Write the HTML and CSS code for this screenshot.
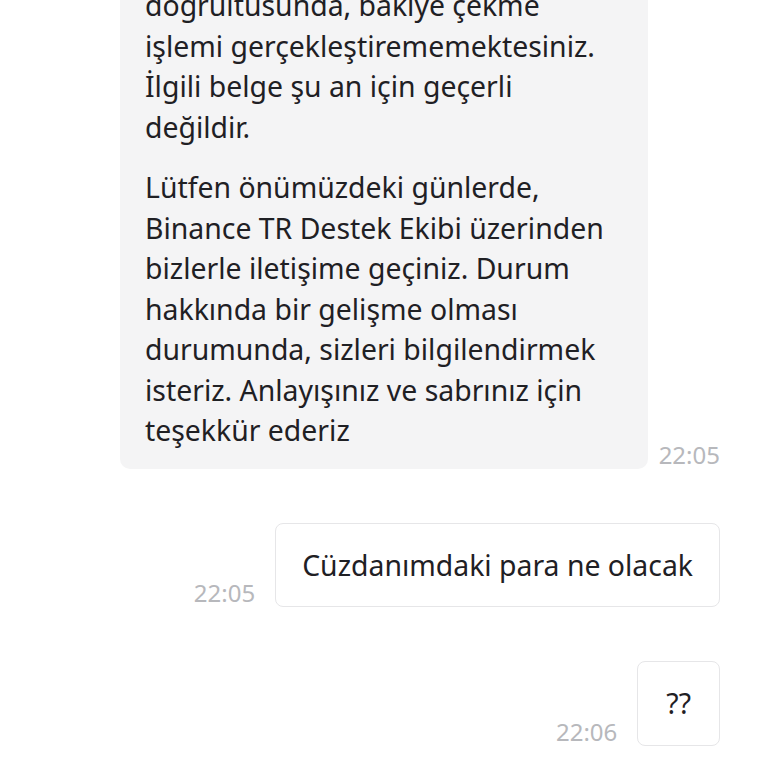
FILE: index.html
```html
<!DOCTYPE html>
<html lang="tr">
<head>
<meta charset="utf-8">
<title>Sohbet</title>
<link rel="stylesheet" href="styles.css">
</head>
<body>
<div class="chat">
  <div class="row row-in">
    <div class="bubble bubble-in">
      <p>doğrultusunda, bakiye çekme<br>işlemi gerçekleştirememektesiniz.<br>İlgili belge şu an için geçerli<br>değildir.</p>
      <p>Lütfen önümüzdeki günlerde,<br>Binance TR Destek Ekibi üzerinden<br>bizlerle iletişime geçiniz. Durum<br>hakkında bir gelişme olması<br>durumunda, sizleri bilgilendirmek<br>isteriz. Anlayışınız ve sabrınız için<br>teşekkür ederiz</p>
    </div>
    <span class="time">22:05</span>
  </div>
  <div class="row row-out">
    <span class="time">22:05</span>
    <div class="bubble bubble-out">Cüzdanımdaki para ne olacak</div>
  </div>
  <div class="row row-out">
    <span class="time">22:06</span>
    <div class="bubble bubble-out bubble-short">??</div>
  </div>
</div>
</body>
</html>
```
FILE: styles.css
```css
html, body {
  margin: 0;
  padding: 0;
  background: #ffffff;
  overflow: hidden;
}
body {
  font-family: "Noto Sans", "Open Sans", sans-serif;
  color: #1f2024;
  width: 768px;
  height: 768px;
}
.chat {
  display: flex;
  flex-direction: column;
  gap: 54px;
  margin-top: -35px;
  padding: 0 48px 0 120px;
}
.row {
  display: flex;
  align-items: flex-end;
  gap: 11px;
}
.row-out {
  justify-content: flex-end;
  gap: 20px;
}
.bubble {
  font-size: 28.4px;
  line-height: 40.5px;
  border-radius: 10px;
  white-space: nowrap;
}
.bubble-in {
  background: #f4f4f5;
  width: 528px;
  box-sizing: border-box;
  padding: 20px 25px 18px 25px;
}
.bubble-in p {
  margin: 0;
}
.bubble-in p + p {
  margin-top: 20px;
}
.bubble-out {
  background: #ffffff;
  border: 1.5px solid #e6e6e8;
  padding: 21px 26px;
  border-radius: 8px;
}
.bubble-short {
  padding: 21px 28px;
}
.time {
  font-size: 24px;
  line-height: 28px;
  color: #b7b8bc;
  padding-bottom: 0;
}
```
